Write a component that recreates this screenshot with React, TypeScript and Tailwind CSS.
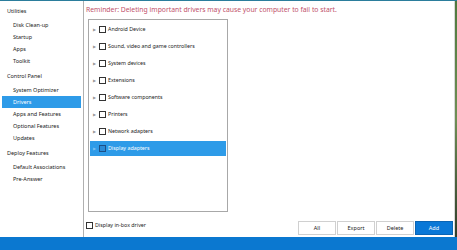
import React from "react";

const font = { fontFamily: '"Noto Sans", "Open Sans", sans-serif' };

function SideHeader({ children }: { children: React.ReactNode }) {
  return <div className="h-[12px] flex items-center pl-[7px] text-[5.5px] text-[#222]">{children}</div>;
}
function SideItem({ children, active }: { children: React.ReactNode; active?: boolean }) {
  return (
    <div
      className={
        "h-[12px] flex items-center pl-[11px] text-[5.5px] mx-[2px] " +
        (active ? "bg-[#2e9be8] text-white" : "text-[#222]")
      }
    >
      {children}
    </div>
  );
}

function TreeRow({ label, selected }: { label: string; selected?: boolean }) {
  return (
    <div className="h-[17px] py-[1px]">
      <div
        className={
          "h-[15px] mx-[1px] flex items-center " + (selected ? "bg-[#2e9be8] text-white" : "text-[#222]")
        }
      >
        <span className={"w-[9px] pl-[3px] text-[3.5px] " + (selected ? "text-[#7fc0ef]" : "text-[#999]")}>▶</span>
        <span
          className={
            "w-[7px] h-[7px] border " + (selected ? "border-[#1c4f86] bg-[#2a8ad6]" : "border-[#333] bg-white")
          }
        />
        <span className="ml-[2px] text-[5.3px]">{label}</span>
      </div>
    </div>
  );
}

function Btn({ children, primary }: { children: React.ReactNode; primary?: boolean }) {
  return (
    <div
      className={
        "h-[14px] w-[38px] flex items-center justify-center text-[5.5px] border " +
        (primary ? "bg-[#0a78d7] border-[#0a64b4] text-white" : "bg-white border-[#d0d0d0] text-[#222]")
      }
    >
      {children}
    </div>
  );
}

export default function App() {
  const rows = [
    "Android Device",
    "Sound, video and game controllers",
    "System devices",
    "Extensions",
    "Software components",
    "Printers",
    "Network adapters",
  ];
  return (
    <div className="w-[457px] h-[250px] flex flex-col bg-white overflow-hidden" style={font}>
      <div className="h-[1px] bg-[#2b7d9c]" />
      <div className="flex-1 flex min-h-0">
        <div className="w-[84px] border-r border-[#b0b0b0] pt-[4px] flex flex-col">
          <SideHeader>Utilities</SideHeader>
          <div className="h-[2px]" />
          <SideItem>Disk Clean-up</SideItem>
          <SideItem>Startup</SideItem>
          <SideItem>Apps</SideItem>
          <SideItem>Toolkit</SideItem>
          <div className="h-[3px]" />
          <SideHeader>Control Panel</SideHeader>
          <div className="h-[2px]" />
          <SideItem>System Optimizer</SideItem>
          <SideItem active>Drivers</SideItem>
          <SideItem>Apps and Features</SideItem>
          <SideItem>Optional Features</SideItem>
          <SideItem>Updates</SideItem>
          <div className="h-[3px]" />
          <SideHeader>Deploy Features</SideHeader>
          <div className="h-[2px]" />
          <SideItem>Default Associations</SideItem>
          <SideItem>Pre-Answer</SideItem>
        </div>
        <div className="flex-1 flex flex-col">
          <div className="h-[18px] flex items-center pl-[2px] text-[6.8px] text-[#c0506a]">
            Reminder: Deleting important drivers may cause your computer to fail to start.
          </div>
          <div className="ml-[4px] w-[140px] h-[193px] border border-[#a8a8a8] pt-[1px]">
            {rows.map((r) => (
              <TreeRow key={r} label={r} />
            ))}
            <TreeRow label="Display adapters" selected />
          </div>
          <div className="flex-1 flex items-start pr-[1px]">
            <div className="flex items-center mt-[10px] ml-[2px]">
              <span className="w-[7px] h-[7px] border border-[#333] bg-white" />
              <span className="ml-[2px] text-[5.3px] text-[#222]">Display in-box driver</span>
            </div>
            <div className="ml-auto mt-[9px] flex gap-[1px]">
              <Btn>All</Btn>
              <Btn>Export</Btn>
              <Btn>Delete</Btn>
              <Btn primary>Add</Btn>
            </div>
          </div>
        </div>
        <div className="w-[3px] bg-gradient-to-b from-[#4f7a3e] via-[#6f8f55] to-[#2f3d2a] border-l border-[#d8d8d8]" />
      </div>
      <div className="h-[13px] bg-[#0b78d0]" />
    </div>
  );
}
